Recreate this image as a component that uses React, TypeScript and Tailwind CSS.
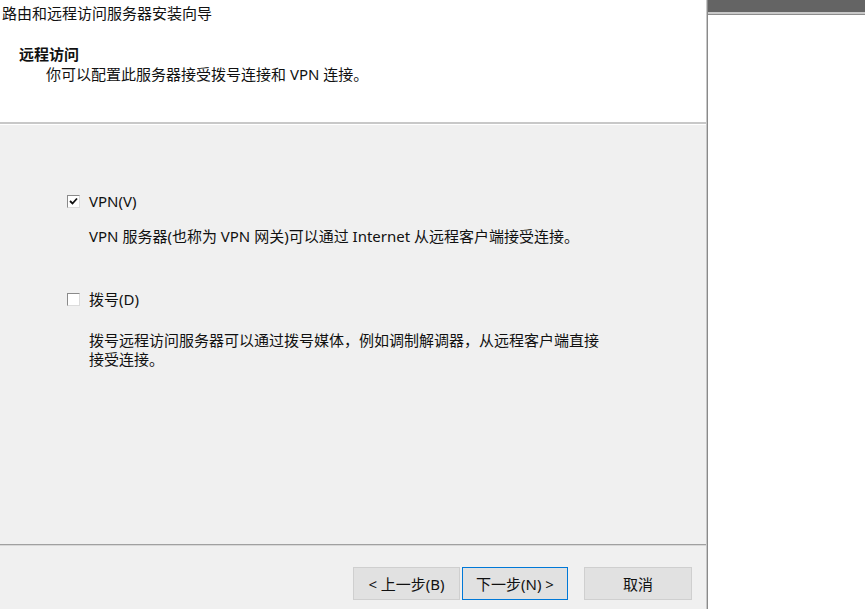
import React from "react";

const font = { fontFamily: '"Noto Sans", "Noto Sans CJK SC", sans-serif' };

function Check({ checked }: { checked: boolean }) {
  return (
    <div className="w-[13px] h-[13px] bg-white border border-[#8a8a8a] border-b-[#dcdcdc] border-r-[#dcdcdc] flex items-center justify-center shrink-0">
      {checked && (
        <svg width="9" height="8" viewBox="0 0 9 8">
          <path d="M1 4 L3.5 6.5 L8 1.5" stroke="#111" strokeWidth="1.8" fill="none" />
        </svg>
      )}
    </div>
  );
}

export default function App() {
  return (
    <div
      className="flex w-[865px] h-[609px] overflow-hidden text-[15px] text-[#111] leading-[20px]"
      style={font}
    >
      <div className="w-[706px] flex flex-col bg-[#f0f0f0]">
        <div className="h-[122px] bg-white flex flex-col">
          <div className="pl-[2px] pt-[3px]">路由和远程访问服务器安装向导</div>
          <div className="pl-[19px] pt-[21px] font-bold">远程访问</div>
          <div className="pl-[46px]">你可以配置此服务器接受拨号连接和 VPN 连接。</div>
        </div>
        <div className="h-[2px] bg-[#c8c8c8]" />
        <div className="h-[1px] bg-white" />
        <div className="flex-1 flex flex-col pl-[67px] pt-[66px]">
          <div className="flex items-center gap-[9px] h-[20px]">
            <Check checked />
            <span>VPN(V)</span>
          </div>
          <div className="pl-[22px] mt-[15px]">
            VPN 服务器(也称为 VPN 网关)可以通过 Internet 从远程客户端接受连接。
          </div>
          <div className="flex items-center gap-[9px] h-[20px] mt-[43px]">
            <Check checked={false} />
            <span>拨号(D)</span>
          </div>
          <div className="pl-[22px] mt-[22px] w-[545px] leading-[19px]">
            拨号远程访问服务器可以通过拨号媒体，例如调制解调器，从远程客户端直接接受连接。
          </div>
        </div>
        <div className="h-[1px] bg-[#a0a0a0]" />
        <div className="h-[1px] bg-[#d8d8d8]" />
        <div className="h-[63px] flex items-start pt-[21px] pl-[353px]">
          <button className="w-[107px] h-[33px] bg-[#e1e1e1] border border-[#cfcfcf] flex items-center justify-center">
            &lt; 上一步(B)
          </button>
          <button className="w-[106px] h-[33px] ml-[2px] border border-[#0078d7] flex items-center justify-center bg-[#e1e1e1]">
            下一步(N) &gt;
          </button>
          <button className="w-[108px] h-[33px] ml-[16px] bg-[#e1e1e1] border border-[#cfcfcf] flex items-center justify-center">
            取消
          </button>
        </div>
      </div>
      <div className="w-[1px] bg-[#c8c8c8]" />
      <div className="w-[1px] bg-[#8a8a8a]" />
      <div className="flex-1 bg-white flex flex-col">
        <div className="h-[12px] bg-[#646464]" />
        <div className="h-[2px] bg-[#c8c8c8]" />
        <div className="h-[1px] bg-[#8c8c8c]" />
      </div>
    </div>
  );
}
